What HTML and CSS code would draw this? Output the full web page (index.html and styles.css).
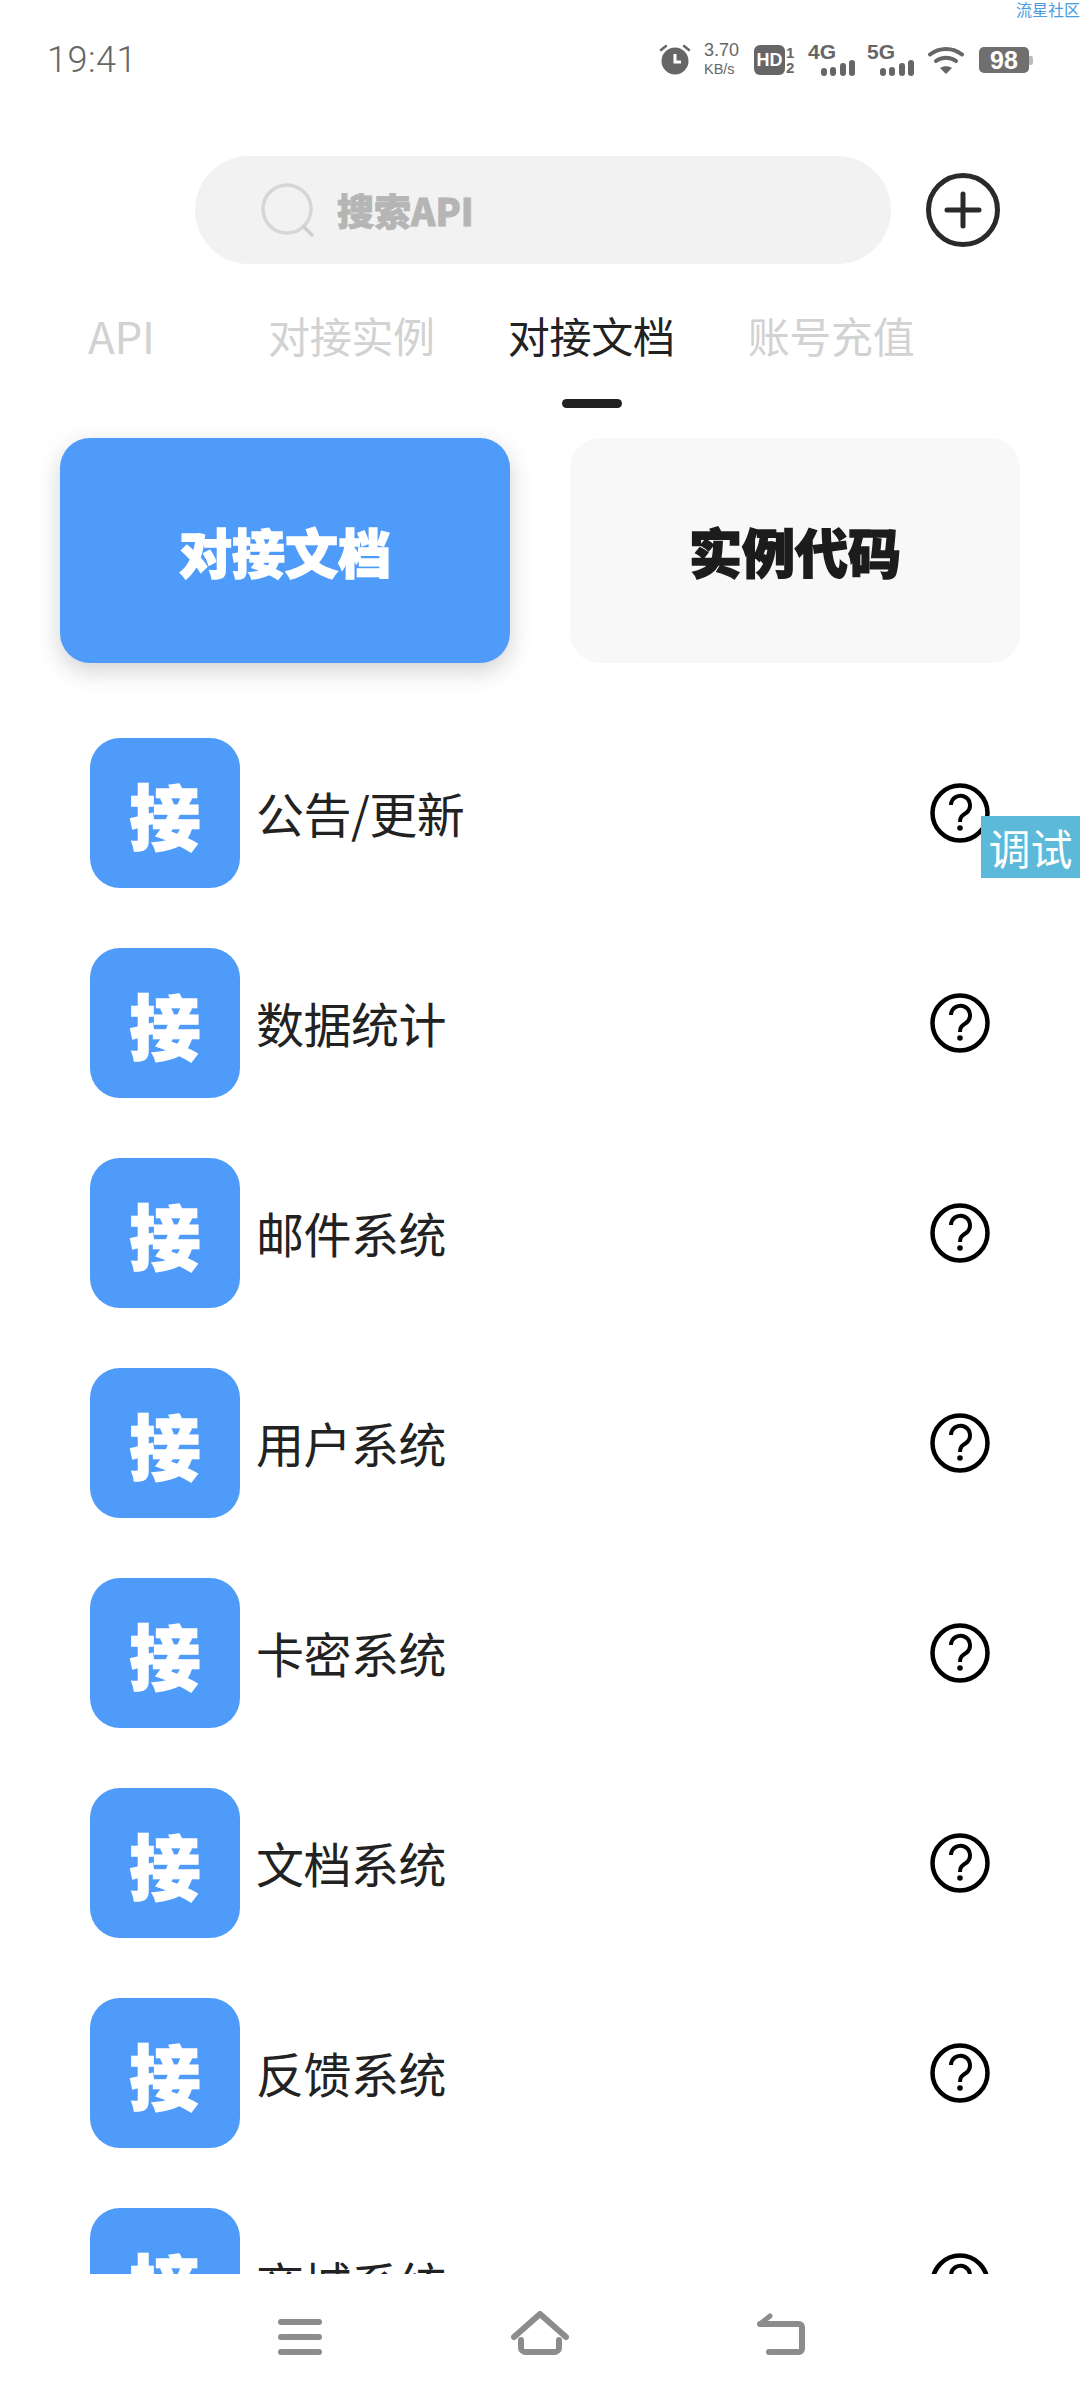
FILE: index.html
```html
<!DOCTYPE html>
<html lang="zh-CN">
<head>
  <meta charset="UTF-8">
  <meta name="viewport" content="width=device-width, initial-scale=1.0">
  <title>对接文档</title>
  <link rel="stylesheet" href="styles.css">
</head>
<body>
  <div class="app">
    <div class="watermark">流星社区</div>

    <!-- status bar -->
    <div class="status-bar">
      <span class="time">19:41</span>
      <div class="status-icons">
        <svg class="st-alarm" width="32" height="32" viewBox="0 0 32 32">
          <circle cx="16" cy="18" r="13.5" fill="#666"/>
          <path d="M16 11v8h6" fill="none" stroke="#fff" stroke-width="3"/>
          <path d="M2 7l5-4M30 7l-5-4" fill="none" stroke="#666" stroke-width="2.5" stroke-linecap="round"/>
        </svg>
        <div class="speed"><span>3.70</span><span class="speed-unit">KB/s</span></div>
        <div class="hd">
          <span class="hd-box">HD</span>
          <span class="hd-nums"><span>1</span><span>2</span></span>
        </div>
        <div class="signal">
          <span class="signal-label">4G</span>
          <span class="bars"><i class="b1"></i><i class="b2"></i><i class="b3"></i><i class="b4"></i></span>
        </div>
        <div class="signal">
          <span class="signal-label">5G</span>
          <span class="bars"><i class="b1"></i><i class="b2"></i><i class="b3"></i><i class="b4"></i></span>
        </div>
        <svg class="st-wifi" width="36" height="28" viewBox="0 0 36 28">
          <path d="M2 8.5C11 1 25 1 34 8.5" fill="none" stroke="#666" stroke-width="4" stroke-linecap="round"/>
          <path d="M8 15c6-4.500 14-4.500 20 0" fill="none" stroke="#666" stroke-width="4" stroke-linecap="round"/>
          <path d="M12 22l6 6 6-6c-3.500-2.500-8.500-2.500-12 0z" fill="#666"/>
        </svg>
        <div class="battery"><span class="battery-box">98</span><span class="battery-nub"></span></div>
      </div>
    </div>

    <!-- search -->
    <div class="search-row">
      <div class="search-box">
        <svg width="54" height="54" viewBox="0 0 54 54">
          <circle cx="26" cy="26" r="24" fill="none" stroke="#d6d6d6" stroke-width="3.500"/>
          <path d="M43 44l8 8" fill="none" stroke="#cfcfcf" stroke-width="3.500" stroke-linecap="round"/>
        </svg>
        <span class="search-text">搜索API</span>
      </div>
      <svg class="add-btn" width="74" height="74" viewBox="0 0 74 74">
        <circle cx="37" cy="37" r="34.500" fill="none" stroke="#2a2a2a" stroke-width="5"/>
        <path d="M37 21v32M21 37h32" fill="none" stroke="#2a2a2a" stroke-width="5" stroke-linecap="round"/>
      </svg>
    </div>

    <!-- tabs -->
    <div class="tabs">
      <span class="tab tab-first">API</span>
      <span class="tab">对接实例</span>
      <span class="tab active">对接文档</span>
      <span class="tab">账号充值</span>
    </div>

    <!-- big switch cards -->
    <div class="cards">
      <div class="card card-blue">对接文档</div>
      <div class="card card-grey">实例代码</div>
    </div>

    <!-- doc list -->
    <div class="doc-list">
      <div class="doc-row">
        <div class="doc-icon">接</div>
        <span class="doc-name">公告/更新</span>
        <svg class="help" width="60" height="60" viewBox="0 0 60 60"><circle cx="30" cy="30" r="27.500" fill="none" stroke="#000" stroke-width="4.500"/><path d="M21 22a9.500 9.500 0 1 1 15 8c-4 2.500-6 4-6 9" fill="none" stroke="#000" stroke-width="4"/><circle cx="30" cy="45" r="2.800"/></svg>
      </div>
      <div class="doc-row">
        <div class="doc-icon">接</div>
        <span class="doc-name">数据统计</span>
        <svg class="help" width="60" height="60" viewBox="0 0 60 60"><circle cx="30" cy="30" r="27.500" fill="none" stroke="#000" stroke-width="4.500"/><path d="M21 22a9.500 9.500 0 1 1 15 8c-4 2.500-6 4-6 9" fill="none" stroke="#000" stroke-width="4"/><circle cx="30" cy="45" r="2.800"/></svg>
      </div>
      <div class="doc-row">
        <div class="doc-icon">接</div>
        <span class="doc-name">邮件系统</span>
        <svg class="help" width="60" height="60" viewBox="0 0 60 60"><circle cx="30" cy="30" r="27.500" fill="none" stroke="#000" stroke-width="4.500"/><path d="M21 22a9.500 9.500 0 1 1 15 8c-4 2.500-6 4-6 9" fill="none" stroke="#000" stroke-width="4"/><circle cx="30" cy="45" r="2.800"/></svg>
      </div>
      <div class="doc-row">
        <div class="doc-icon">接</div>
        <span class="doc-name">用户系统</span>
        <svg class="help" width="60" height="60" viewBox="0 0 60 60"><circle cx="30" cy="30" r="27.500" fill="none" stroke="#000" stroke-width="4.500"/><path d="M21 22a9.500 9.500 0 1 1 15 8c-4 2.500-6 4-6 9" fill="none" stroke="#000" stroke-width="4"/><circle cx="30" cy="45" r="2.800"/></svg>
      </div>
      <div class="doc-row">
        <div class="doc-icon">接</div>
        <span class="doc-name">卡密系统</span>
        <svg class="help" width="60" height="60" viewBox="0 0 60 60"><circle cx="30" cy="30" r="27.500" fill="none" stroke="#000" stroke-width="4.500"/><path d="M21 22a9.500 9.500 0 1 1 15 8c-4 2.500-6 4-6 9" fill="none" stroke="#000" stroke-width="4"/><circle cx="30" cy="45" r="2.800"/></svg>
      </div>
      <div class="doc-row">
        <div class="doc-icon">接</div>
        <span class="doc-name">文档系统</span>
        <svg class="help" width="60" height="60" viewBox="0 0 60 60"><circle cx="30" cy="30" r="27.500" fill="none" stroke="#000" stroke-width="4.500"/><path d="M21 22a9.500 9.500 0 1 1 15 8c-4 2.500-6 4-6 9" fill="none" stroke="#000" stroke-width="4"/><circle cx="30" cy="45" r="2.800"/></svg>
      </div>
      <div class="doc-row">
        <div class="doc-icon">接</div>
        <span class="doc-name">反馈系统</span>
        <svg class="help" width="60" height="60" viewBox="0 0 60 60"><circle cx="30" cy="30" r="27.500" fill="none" stroke="#000" stroke-width="4.500"/><path d="M21 22a9.500 9.500 0 1 1 15 8c-4 2.500-6 4-6 9" fill="none" stroke="#000" stroke-width="4"/><circle cx="30" cy="45" r="2.800"/></svg>
      </div>
      <div class="doc-row">
        <div class="doc-icon">接</div>
        <span class="doc-name">商城系统</span>
        <svg class="help" width="60" height="60" viewBox="0 0 60 60"><circle cx="30" cy="30" r="27.500" fill="none" stroke="#000" stroke-width="4.500"/><path d="M21 22a9.500 9.500 0 1 1 15 8c-4 2.500-6 4-6 9" fill="none" stroke="#000" stroke-width="4"/><circle cx="30" cy="45" r="2.800"/></svg>
      </div>
    </div>

    <div class="debug-btn">调试</div>

    <!-- system nav -->
    <div class="nav-bar">
      <svg width="44" height="36" viewBox="0 0 44 36">
        <path d="M3 3h38M3 18h38M3 33h38" fill="none" stroke="#8c8c8c" stroke-width="6" stroke-linecap="round"/>
      </svg>
      <svg width="58" height="44" viewBox="0 0 58 44">
        <path d="M3 26L29 3l26 23" fill="none" stroke="#8c8c8c" stroke-width="6" stroke-linecap="round" stroke-linejoin="round"/>
        <path d="M10 29v8c0 2 2 4 4 4h30c2 0 4-2 4-4v-8" fill="none" stroke="#8c8c8c" stroke-width="6" stroke-linecap="round"/>
      </svg>
      <svg width="48" height="42" viewBox="0 0 48 42">
        <path d="M3 11h39c1.500 0 3 1.500 3 3v22c0 1.500-1.500 3-3 3H12" fill="none" stroke="#8c8c8c" stroke-width="6" stroke-linecap="round"/>
        <path d="M3 11l10-8" fill="none" stroke="#8c8c8c" stroke-width="5" stroke-linecap="round"/>
      </svg>
    </div>
  </div>
</body>
</html>
```

FILE: styles.css
```css
* {
  box-sizing: border-box;
}

body {
  margin: 0;
  padding: 0;
  background-color: #fff;
  font-family: "Noto Sans CJK SC", "Noto Sans", sans-serif;
  color: #222;
}

.app {
  position: relative;
  width: 1080px;
  height: 2400px;
  display: flex;
  flex-direction: column;
  overflow: hidden;
}

.watermark {
  position: absolute;
  top: 0;
  right: 0;
  font-size: 16px;
  line-height: 18px;
  color: #4a9be0;
}

/* status bar */
.status-bar {
  height: 120px;
  padding: 0 47px 0 47px;
  display: flex;
  align-items: center;
  justify-content: space-between;
  color: #666;
}

.time {
  font-family: Roboto, sans-serif;
  font-size: 36px;
  font-weight: 300;
  letter-spacing: 0.5px;
}

.status-icons {
  display: flex;
  align-items: center;
}

.st-alarm {
  margin-top: -2px;
}

.speed {
  width: 38px;
  margin-left: 13px;
  display: flex;
  flex-direction: column;
  font-family: "Liberation Sans", sans-serif;
  font-size: 18px;
  line-height: 19px;
}

.speed-unit {
  font-size: 14.5px;
}

.hd {
  margin-left: 12px;
  display: flex;
  align-items: center;
}

.hd-box {
  width: 31px;
  height: 30px;
  border-radius: 6px;
  background: #666;
  color: #fff;
  font-family: "Liberation Sans", sans-serif;
  font-size: 18px;
  font-weight: 700;
  line-height: 30px;
  text-align: center;
}

.hd-nums {
  width: 13px;
  margin-left: 1px;
  display: flex;
  flex-direction: column;
  font-family: "Liberation Sans", sans-serif;
  font-size: 15px;
  font-weight: 700;
  line-height: 15px;
}

.signal {
  position: relative;
  width: 47px;
  height: 32px;
  margin-left: 9px;
}

.signal + .signal {
  margin-left: 12px;
}

.signal-label {
  position: absolute;
  left: 0;
  top: -2px;
  font-family: "Liberation Sans", sans-serif;
  font-size: 21px;
  font-weight: 700;
  line-height: 20px;
}

.bars {
  position: absolute;
  right: 0;
  bottom: 0;
  display: flex;
  align-items: flex-end;
  gap: 3.5px;
}

.bars i {
  display: block;
  width: 6px;
  border-radius: 3px;
  background: #666;
}

.bars .b1 { height: 8px; }
.bars .b2 { height: 9px; }
.bars .b3 { height: 13px; }
.bars .b4 { height: 16px; }

.st-wifi {
  margin-left: 14px;
}

.battery {
  margin-left: 15px;
  display: flex;
  align-items: center;
}

.battery-box {
  width: 50px;
  height: 26px;
  border-radius: 5px;
  background: #6f6f6f;
  color: #fff;
  font-family: "Liberation Sans", sans-serif;
  font-size: 25px;
  font-weight: 700;
  line-height: 26px;
  text-align: center;
}

.battery-nub {
  width: 4px;
  height: 9px;
  border-radius: 0 2px 2px 0;
  background: #bbb;
}

/* search */
.search-row {
  margin-top: 36px;
  padding-left: 195px;
  display: flex;
  align-items: center;
}

.search-box {
  width: 696px;
  height: 108px;
  padding-left: 66px;
  border-radius: 54px;
  background: #f2f2f2;
  display: flex;
  align-items: center;
  gap: 22px;
}

.search-text {
  font-size: 37px;
  font-weight: 900;
  color: #b5b5b5;
  -webkit-text-stroke: 0.8px #b5b5b5;
}

.add-btn {
  margin-left: 35px;
}

/* tabs */
.tabs {
  margin-top: 36px;
  padding-left: 88px;
  display: flex;
  gap: 73px;
}

.tab {
  font-size: 42px;
  line-height: 70px;
  white-space: nowrap;
  color: #d2d2d2;
  letter-spacing: -0.3px;
}

.tab-first {
  width: 107px;
  font-size: 44px;
}

.tab.active {
  position: relative;
  color: #222;
}

.tab.active::after {
  content: "";
  position: absolute;
  left: 54px;
  top: 99px;
  width: 60px;
  height: 9px;
  border-radius: 5px;
  background: #222;
}

/* switch cards */
.cards {
  margin-top: 68px;
  padding: 0 60px;
  display: flex;
  justify-content: space-between;
}

.card {
  width: 450px;
  height: 225px;
  border-radius: 30px;
  display: flex;
  align-items: center;
  justify-content: center;
  font-size: 53px;
  font-weight: 900;
}

.card-blue {
  background: #4f9bfa;
  color: #fff;
  -webkit-text-stroke: 1.5px #fff;
  box-shadow: 0 8px 24px rgba(0, 0, 0, 0.18);
}

.card-grey {
  background: #f8f8f8;
  color: #1c1c1c;
  -webkit-text-stroke: 1.5px #1c1c1c;
}

/* doc list */
.doc-list {
  flex: 1;
  min-height: 0;
  margin-top: 75px;
  padding: 0 90px;
  overflow: hidden;
  display: flex;
  flex-direction: column;
  gap: 60px;
}

.doc-row {
  flex: none;
  height: 150px;
  display: flex;
  align-items: center;
}

.doc-icon {
  width: 150px;
  height: 150px;
  border-radius: 30px;
  background: #4f9bfa;
  color: #fff;
  display: flex;
  align-items: center;
  justify-content: center;
  font-size: 71px;
  font-weight: 900;
  -webkit-text-stroke: 1.5px #fff;
}

.doc-name {
  flex: 1;
  margin-left: 16px;
  padding-bottom: 3px;
  font-size: 48px;
  letter-spacing: -0.5px;
  color: #222;
}

.debug-btn {
  position: absolute;
  left: 981px;
  top: 816px;
  width: 99px;
  height: 62px;
  background: #5cb9d9;
  color: #fff;
  font-size: 42px;
  line-height: 62px;
  text-align: center;
}

/* system nav */
.nav-bar {
  flex: none;
  height: 126px;
  padding: 0 275px 45px 278px;
  display: flex;
  align-items: flex-end;
  justify-content: space-between;
  background: #fff;
}
```
